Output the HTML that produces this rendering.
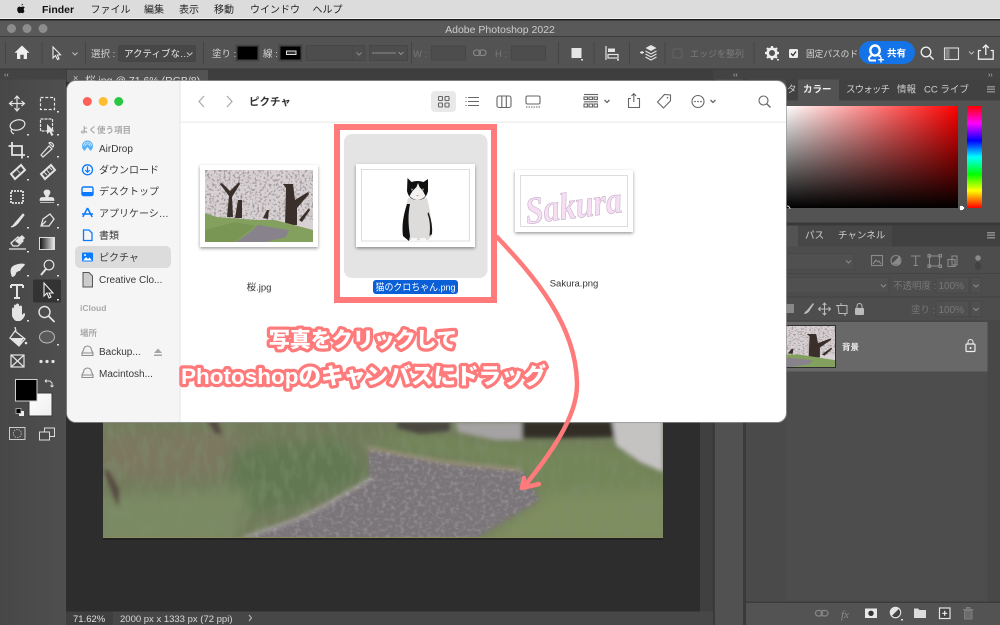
<!DOCTYPE html>
<html lang="ja"><head><meta charset="utf-8"><title>Photoshop</title>
<style>
html,body{margin:0;padding:0;width:1000px;height:625px;overflow:hidden;background:#2d2d2d}
svg{display:block}
text{font-family:"Liberation Sans","Noto Sans CJK JP",sans-serif;font-size:10px}
.m{font-size:10px;fill:#222}
.o{fill:#d4d4d4;font-size:9.5px}
.d{fill:#777;font-size:9.5px}
.s{fill:#3a3a3a;font-size:10px}
.h{fill:#a9a9a9;font-size:8.5px;font-weight:bold}
.t{fill:#cfcfcf;font-size:9.5px}
.i{fill:none;stroke:#e4e4e4;stroke-width:1.2}
.f{fill:#e4e4e4}
.b{fill:none;stroke:#666;stroke-width:1.1}
.c{fill:none;stroke:#bbb;stroke-width:1.1}
.u{fill:none;stroke:#8a8a8a;stroke-width:1.1}
.big{font-weight:900;fill:#fff;stroke:#ff7b7b;stroke-width:6.5px;paint-order:stroke;stroke-linejoin:round;text-anchor:middle}
</style></head><body>
<svg width="1000" height="625" viewBox="0 0 1000 625" xmlns="http://www.w3.org/2000/svg">
<defs>
<filter id="bl" x="-10%" y="-10%" width="120%" height="120%"><feGaussianBlur stdDeviation="7"/></filter>
<filter id="bl2" x="-10%" y="-10%" width="120%" height="120%"><feGaussianBlur stdDeviation="2"/></filter>
<filter id="sh" x="-10%" y="-10%" width="120%" height="130%"><feDropShadow dx="0" dy="1.5" stdDeviation="1.5" flood-color="#000" flood-opacity=".4"/></filter>
<filter id="sp" x="0" y="0" width="100%" height="100%"><feTurbulence type="fractalNoise" baseFrequency=".42" numOctaves="2" seed="4"/><feColorMatrix values="0 0 0 0 .36  0 0 0 0 .32  0 0 0 0 .33  0 0 0 -4.5 2.3"/></filter>
<filter id="gr" x="0" y="0" width="100%" height="100%"><feTurbulence type="fractalNoise" baseFrequency=".22 .28" numOctaves="2" seed="9"/><feColorMatrix values="0 0 0 0 .85  0 0 0 0 .84  0 0 0 0 .84  0 0 0 -3 1.65"/></filter>
<filter id="ga" x="0" y="0" width="100%" height="100%"><feTurbulence type="fractalNoise" baseFrequency=".12 .05" numOctaves="2" seed="3"/><feColorMatrix values="0 0 0 0 .2  0 0 0 0 .27  0 0 0 0 .15  0 0 0 -3 1.7"/></filter>
<linearGradient id="h1" x1="0" x2="1" y1="0" y2="0"><stop offset="0" stop-color="#fff"/><stop offset="1" stop-color="#f00"/></linearGradient>
<linearGradient id="h2" x1="0" x2="0" y1="0" y2="1"><stop offset="0" stop-color="#000" stop-opacity="0"/><stop offset="1" stop-color="#000"/></linearGradient>
<linearGradient id="hue" x1="0" x2="0" y1="0" y2="1"><stop offset="0" stop-color="#f00"/><stop offset=".17" stop-color="#f0f"/><stop offset=".34" stop-color="#00f"/><stop offset=".5" stop-color="#0ff"/><stop offset=".67" stop-color="#0f0"/><stop offset=".83" stop-color="#ff0"/><stop offset="1" stop-color="#f00"/></linearGradient>
<linearGradient id="gd" x1="0" x2="1" y1="0" y2="0"><stop offset="0" stop-color="#111"/><stop offset="1" stop-color="#eee"/></linearGradient>
<linearGradient id="tb" x1="0" x2="1" y1="0" y2="0"><stop offset="0" stop-color="#474747"/><stop offset="1" stop-color="#4f4f4f"/></linearGradient>
<linearGradient id="wh" x1="0" x2="1" y1="0" y2="1"><stop offset="0" stop-color="#fff"/><stop offset="1" stop-color="#eee"/></linearGradient>
<clipPath id="win"><rect x="67" y="81" width="719" height="341" rx="9"/></clipPath>
<clipPath id="ph"><rect x="103" y="400" width="560" height="138"/></clipPath>
<clipPath id="pth"><path d="M368 448L445 463L522 470L540 500L473 538L243 538L321 507L370 477Z"/></clipPath>
<symbol id="scene" viewBox="0 0 108 72" preserveAspectRatio="none">
<rect width="108" height="72" fill="#d8d2d4"/>
<rect width="108" height="50" filter="url(#sp)"/>
<path d="M22 47L24 26L15 14L17 13L25 21L34 12L35 14L27 27L28 47Z M80 55L81 18L78 14L88 14L90 30L103 22L104 24L92 38L92 55Z M30 48L33 30L37 30L37 48Z M94 50L104 38L105 40L97 52Z M58 48L62 40L64 40L63 49Z" fill="#3a2f2a"/>
<path d="M0 43L12 47L51 50L70 50L108 60V72H0Z" fill="#84a05e"/>
<path d="M0 60L30 52L50 56L30 72H0Z" fill="#7a9654"/>
<path d="M53 55L84 60L81 67L61 72L31 72L44 63Z" fill="#87828b"/>
</symbol>
</defs>

<!-- macOS menu -->
<rect width="1000" height="19" fill="#dcdcdc"/>
<rect y="18" width="1000" height="1.5" fill="#efefef"/>
<path d="M21.5 5.5c.8-.1 1.5-.6 1.6-1.600-1 .1-1.700.8-1.600 1.600zM24.500 11c-.3.8-1 2.200-1.900 2.200-.6 0-.9-.4-1.600-.4s-1 .4-1.600.4c-1 0-2.200-1.900-2.200-3.700 0-1.900 1.200-2.900 2.300-2.900.7 0 1.200.4 1.600.4s1-.5 1.800-.5c.6 0 1.400.3 1.900 1-1.600 1-1.300 3.300.3 3.900z" fill="#111"/>
<text x="42" y="13" style="font-size:10.5px;font-weight:bold;fill:#111">Finder</text>
<text x="90.5" y="13" class="m">ファイル</text>
<text x="144" y="13" class="m">編集</text>
<text x="179" y="13" class="m">表示</text>
<text x="214" y="13" class="m">移動</text>
<text x="250" y="13" class="m">ウインドウ</text>
<text x="312.5" y="13" class="m">ヘルプ</text>

<!-- PS window -->
<rect y="19" width="1000" height="606" fill="#3a3a3a"/>
<rect y="19" width="1000" height="1.5" fill="#1d1d1d"/>
<rect y="20.5" width="1000" height="15.5" fill="#595959"/>
<circle cx="11.5" cy="28.5" r="4.5" fill="#8c8c8c"/><circle cx="27" cy="28.5" r="4.5" fill="#8c8c8c"/><circle cx="43" cy="28.5" r="4.5" fill="#8c8c8c"/>
<text x="500" y="33" text-anchor="middle" style="font-size:10.5px;fill:#cdcdcd">Adobe Photoshop 2022</text>
<rect y="36" width="1000" height="1" fill="#3c3c3c"/>
<!-- options bar -->
<rect y="37" width="1000" height="31.5" fill="#535353"/>
<rect y="68.5" width="1000" height="1" fill="#3a3a3a"/>
<g fill="#444">
<rect x="5" y="42" width="1" height="22"/><rect x="41.5" y="42" width="1" height="22"/><rect x="85" y="42" width="1" height="22"/><rect x="203" y="42" width="1" height="22"/><rect x="411" y="42" width="1" height="22"/><rect x="558" y="42" width="1" height="22"/><rect x="593.5" y="42" width="1" height="22"/><rect x="629" y="42" width="1" height="22"/><rect x="664.5" y="42" width="1" height="22"/><rect x="753.5" y="42" width="1" height="22"/>
</g>
<path d="M22 45.5L14.5 52.800H17V59H20.300V54.800H23.700V59H27V52.800H29.500Z" fill="#eee"/>
<path d="M53 47L53 58L55.5 55.5L57.5 59.5L59 58.800L57.300 55L60.500 54.800Z" fill="#4a4a4a" stroke="#eee" stroke-width="1.100"/>
<path d="M72.500 52.500l2.500 2.500 2.500-2.500" class="c"/>
<text x="91" y="57" class="o">選択 :</text>
<rect x="118.500" y="45.500" width="77" height="16" rx="2" fill="#474747" stroke="#454545"/>
<text x="124" y="57" style="font-size:9.5px;fill:#e8e8e8">アクティブな…</text>
<path d="M187 52.500l2.700 2.700 2.700-2.700" class="c"/>
<text x="212" y="57" class="o">塗り :</text>
<rect x="236.500" y="45.500" width="22" height="15" fill="#000" stroke="#444" stroke-width="2"/>
<text x="263" y="57" class="o">線 :</text>
<rect x="279.500" y="45.500" width="22" height="15" fill="#000" stroke="#444" stroke-width="2"/>
<rect x="286.500" y="51" width="9.500" height="3.500" fill="#333" stroke="#ddd"/>
<rect x="306" y="45.500" width="47" height="15" fill="#4d4d4d" stroke="#474747"/>
<rect x="353" y="45.500" width="12" height="15" fill="#4d4d4d" stroke="#474747"/>
<path d="M356.500 52.500l2.500 2.500 2.500-2.500" class="u"/>
<rect x="369.500" y="45.500" width="38" height="15" fill="#4d4d4d" stroke="#474747"/>
<path d="M372 53h24" class="u"/><path d="M398.500 52l2.500 2.500 2.500-2.500" class="u"/>
<text x="413" y="57" class="d">W :</text>
<rect x="431.500" y="46" width="34" height="14" fill="#4d4d4d" stroke="#474747"/>
<g class="u"><rect x="473.500" y="50" width="7" height="5.500" rx="2.700"/><rect x="479" y="50" width="7" height="5.500" rx="2.700"/></g>
<text x="495" y="57" class="d">H :</text>
<rect x="511.500" y="46" width="34" height="14" fill="#4d4d4d" stroke="#474747"/>
<rect x="571.500" y="48" width="10" height="10" fill="#e4e4e4"/><rect x="581" y="59" width="2" height="1.500" fill="#ddd"/>
<path d="M606 46v14" class="i"/><rect x="608" y="48.500" width="7" height="3.500" class="f"/><rect x="608" y="54.500" width="10" height="3.500" class="i"/><rect x="617" y="59" width="2" height="1.500" fill="#ddd"/>
<path d="M640 52.500h4M642 54v-3" class="i"/>
<path d="M651 45l5.500 3-5.500 3-5.500-3z" class="f"/><path d="M645.500 51l5.500 3 5.500-3M645.500 54l5.500 3 5.500-3M645.500 57l5.500 3 5.500-3" class="i"/>
<rect x="673" y="49" width="9" height="9" rx="1.500" fill="none" stroke="#636363"/>
<text x="690" y="57" style="font-size:9px;fill:#7c7c7c">エッジを整列</text>
<g transform="translate(772 53)"><circle r="4.300" fill="none" stroke="#eee" stroke-width="2.600"/><path d="M0-7V-4.500M0 7V4.500M-7 0H-4.500M7 0H4.500M-5-5L-3.200-3.200M5 5L3.200 3.200M-5 5L-3.200 3.200M5-5L3.200-3.200" stroke="#eee" stroke-width="2.200"/></g>
<rect x="777" y="59" width="2" height="1.500" fill="#ddd"/>
<rect x="789" y="49" width="9" height="9" rx="1.500" fill="#eee"/><path d="M791 53.500l2 2 3-4" stroke="#333" stroke-width="1.300" fill="none"/>
<text x="806" y="57" style="font-size:9.2px;fill:#d8d8d8" textLength="52" lengthAdjust="spacingAndGlyphs">固定パスのド</text>
<rect x="859" y="41" width="56" height="23" rx="11.500" fill="#1473e6"/>
<ellipse cx="875" cy="50.500" rx="4.700" ry="5" fill="none" stroke="#fff" stroke-width="2.400"/>
<path d="M871.500 55.500C868.500 57 868.500 59 870 60.500H876M878.500 55.500L881 56.500" fill="none" stroke="#fff" stroke-width="2"/>
<path d="M881 62.500v-5.500M878.200 59.700h5.600" stroke="#fff" stroke-width="1.400"/>
<text x="887" y="56.500" style="font-size:9.5px;font-weight:bold;fill:#fff">共有</text>
<circle cx="926" cy="52" r="4.800" fill="none" stroke="#eee" stroke-width="1.300"/><path d="M929.500 55.500l4 4" stroke="#eee" stroke-width="1.400"/>
<rect x="944.500" y="48" width="14" height="11.500" fill="none" stroke="#ddd" stroke-width="1.100"/><rect x="945.500" y="49" width="4" height="9.500" fill="#888"/>
<path d="M969 51.500l2.500 2.500 2.500-2.500" class="c"/>
<path d="M981 50.500h-2.500v8.700h14.700v-8.700h-2.500M985.800 55v-9.500M982.800 48l3-3 3 3" fill="none" stroke="#eee" stroke-width="1.300"/>

<!-- strip -->
<rect y="69.500" width="1000" height="10" fill="#434343"/>
<text x="4" y="77" style="font-size:7px;fill:#bbb">‹‹</text>
<text x="733" y="77" style="font-size:7px;fill:#bbb">‹‹</text>
<text x="988" y="77" style="font-size:7px;fill:#bbb">››</text>

<!-- canvas area -->
<rect x="66" y="69.500" width="647" height="543" fill="#2d2d2d"/>
<rect x="66" y="69.500" width="647" height="12" fill="#3e3e3e"/>
<rect x="67" y="70" width="141" height="12" fill="#535353"/>
<text x="73" y="81" style="font-size:9px;fill:#ccc">×</text>
<text x="85" y="84" style="font-size:10.5px;fill:#ddd">桜.jpg @ 71.6% (RGB/8)</text>
<rect x="700" y="81" width="12.500" height="531.500" fill="#404040"/>

<!-- photo -->
<g clip-path="url(#ph)">
<rect x="103" y="400" width="560" height="138" fill="#717b5b"/>
<g filter="url(#bl)">
<path d="M103 430H240L250 470L170 482L103 478Z" fill="#7b7861"/>
<path d="M230 450L345 440L365 478L300 505L235 515Z" fill="#627852"/>
<path d="M103 495L250 490L235 545H95Z" fill="#7a8a64"/>
<path d="M400 432L522 444L620 445L670 480V545H470L545 500L522 470L368 445Z" fill="#738658"/>
<path d="M545 495L670 490V545H475Z" fill="#7f8e5e"/>
</g>
<rect x="103" y="422" width="560" height="116" filter="url(#ga)" opacity=".45"/>
<g filter="url(#bl2)">
<path d="M368 448L445 463L522 470L540 500L473 540L243 540L321 507L370 477Z" fill="#7a7479"/>
<path d="M243 538L300 518L325 505L372 478" fill="none" stroke="#a5a09c" stroke-width="3"/>
<path d="M368 448L445 462L522 470" fill="none" stroke="#a39a7c" stroke-width="2.500"/>
<path d="M397 421H450V431L420 434L397 428Z" fill="#4a4640"/>
<path d="M522 421H620V437L560 438L522 438Z" fill="#302d28"/>
<path d="M455 422H522V440L495 440L458 432Z" fill="#a4a2a2"/>
<path d="M612 420H663V472L640 462L616 445Z" fill="#c5c2c2"/>
<path d="M207 420h10l5 14h-6zM104 470L118 508L119 490L108 470Z" fill="#55473f"/>
</g>
<g clip-path="url(#pth)"><rect x="240" y="445" width="305" height="95" filter="url(#gr)" opacity=".18"/></g>
</g>
<rect x="103" y="537" width="560" height="1" fill="#8f8a5e"/>
<rect x="103" y="538" width="560" height="2" fill="#222"/>

<!-- left toolbar -->
<rect y="79.500" width="66" height="545.500" fill="url(#tb)"/>
<rect x="33" y="279.500" width="28" height="23" rx="2" fill="#333"/>
<g>
<path d="M17 96.500v14M10 103.500h14" class="i"/><path d="M14.500 99l2.500-3 2.500 3M14.500 108l2.500 3 2.500-3M12.500 101l-3 2.500 3 2.500M21.500 101l3 2.500-3 2.500" class="i"/>
<rect x="40.500" y="97.500" width="14" height="12" class="i" stroke-dasharray="3 1.800"/>
<ellipse cx="17.500" cy="125" rx="7.500" ry="5" class="i" transform="rotate(-15 17.500 125)"/><path d="M12 129c-2 2 0 4 2 5" class="i"/>
<rect x="40.500" y="119" width="12" height="12" class="i" stroke-dasharray="3 1"/><path d="M47 124v10l2.500-2 2 4 2-1-2-3.500h3z" class="f"/>
<path d="M12 142v13h13M8.500 146h13.500v12.500" class="i" style="stroke-width:1.800"/>
<path d="M41 155l8-9 3 3-9 8zM49 143c2-2 6 2 4 4z" class="i"/>
<path d="M11 174l10-9 4 5-10 9z" class="i" style="stroke-width:2"/><path d="M17 170l3 3" stroke="#bbb"/>
<path d="M41 174l10-9 4 5-10 9z" class="i" style="stroke-width:2"/><path d="M46 169l4 5M44 172l3 3M49 167l3 3" stroke="#ddd"/>
<rect x="11" y="191" width="12" height="12" class="i" style="stroke-width:1.800" stroke-dasharray="2 1"/>
<path d="M47 190c-2 0-3 1-3 2.500 0 2 2 2 2 5h-4c-1.500 0-2 1-2 3h14c0-2-.5-3-2-3h-4c0-3 2-3 2-5 0-1.500-1-2.500-3-2.500zM40 202.500h14" class="f" stroke="#e4e4e4" stroke-width=".8"/>
<path d="M11 227c3-1 3-3 5-5l7-8 1 1-6 8c-2 2-4 4-7 4z" class="f" stroke="#e4e4e4"/>
<path d="M41 226l2-7 7-5 4 5-5 7zM41 226l5-5" class="i" style="stroke-width:1.300"/>
<path d="M11 243l7-6 5 4-5 5h-5zM9 249h17" class="i" style="stroke-width:1.300"/><path d="M15 241l7-6 3 3-6 6z" class="f"/>
<rect x="39.500" y="237.500" width="15" height="12" fill="url(#gd)" stroke="#ddd"/>
<path d="M12 277c-2-5-2-9 1-11 3-2 9-3 12-2-1 3-4 4-5 7-2 0-3 1-4 2 0 2-2 4-4 4z" class="f"/>
<circle cx="49" cy="265" r="4.800" class="i"/><path d="M46 269l-5 6" class="i" style="stroke-width:2"/>
<path d="M11 285h12M17 285v13M14 298h6M11 285v3M23 285v3" class="i" style="stroke-width:2"/>
<path d="M44 283v13l3-3 2 5 2-1-2-4h4z" fill="#333" stroke="#eee" stroke-width="1.100"/>
<path d="M12 316v-7c0-2 2-2 2 0v-3c0-2 2-2 2 0v-1c0-2 3-2 3 0v2c0-2 3-2 3 0v8l2-2c1 0 1 1 1 2-1 3-3 5-5 6h-4c-2-1-3-3-4-5z" class="f"/>
<circle cx="44.500" cy="312" r="5.500" class="i" style="stroke-width:1.400"/><path d="M48.500 316l6 6" class="i" style="stroke-width:1.800"/>
<path d="M15 331l10 8-6 7-9-8zM16 331l-1-4" class="i" style="stroke-width:1.300"/><path d="M11 338h13l-5 8z" class="f"/><circle cx="26" cy="343" r="1.300" class="f"/>
<ellipse cx="47" cy="337" rx="7.500" ry="6" fill="#5a5a5a" stroke="#bbb"/>
<rect x="11" y="355" width="13" height="12" class="i"/><path d="M11 355l13 12M24 355l-13 12" class="i"/>
<circle cx="41" cy="361.500" r="1.600" class="f"/><circle cx="47" cy="361.500" r="1.600" class="f"/><circle cx="53" cy="361.500" r="1.600" class="f"/>
<g fill="#ddd"><rect x="57" y="111" width="2" height="1.500"/><rect x="27" y="134" width="2" height="1.500"/><rect x="57" y="134" width="2" height="1.500"/><rect x="27" y="156" width="2" height="1.500"/><rect x="57" y="156" width="2" height="1.500"/><rect x="27" y="179" width="2" height="1.500"/><rect x="57" y="204" width="2" height="1.500"/><rect x="27" y="227" width="2" height="1.500"/><rect x="57" y="227" width="2" height="1.500"/><rect x="27" y="251" width="2" height="1.500"/><rect x="27" y="275" width="2" height="1.500"/><rect x="57" y="275" width="2" height="1.500"/><rect x="57" y="299" width="2" height="1.500"/><rect x="27" y="320" width="2" height="1.500"/><rect x="57" y="344" width="2" height="1.500"/></g>
</g>
<path d="M45 381h5l2 2v4M52 387l-1.500-1.500M52 387l1.500-1.500M45 381l1.500-1.500M45 381l1.500 1.500" stroke="#ddd" fill="none" stroke-width="1"/>
<rect x="29" y="393" width="23" height="23" fill="url(#wh)" stroke="#3a3a3a"/>
<rect x="15.500" y="379.500" width="21.500" height="21.500" fill="#000" stroke="#cfcfcf" stroke-width="1"/>
<rect x="19" y="411" width="5" height="5" fill="#eee"/><rect x="16" y="408.500" width="5" height="5" fill="#000" stroke="#ccc" stroke-width=".7"/>
<rect x="9.500" y="427.500" width="15.500" height="12" fill="none" stroke="#ccc"/><circle cx="17.300" cy="433.500" r="4" fill="none" stroke="#aaa" stroke-dasharray="1.500 1"/>
<rect x="44.500" y="428" width="10" height="8.500" fill="none" stroke="#ddd"/><rect x="39.500" y="432" width="10" height="8" fill="#4a4a4a" stroke="#ddd"/>

<!-- right dock and panels -->
<rect x="712.500" y="79.500" width="287.500" height="546" fill="#3a3a3a"/>
<rect x="715" y="79.500" width="28" height="546" fill="#515151"/>
<rect x="746" y="79.500" width="254" height="546" fill="#4a4a4a"/>
<rect x="786" y="79.500" width="214" height="21" fill="#414141"/>
<rect x="798" y="79.500" width="41" height="21" fill="#535353"/>
<text x="803" y="92.500" style="font-size:9.5px;font-weight:bold;fill:#eee">カラー</text>
<text x="846" y="92.500" class="t" textLength="44">スウォッチ</text>
<text x="897" y="92.500" class="t">情報</text>
<text x="924" y="92.500" class="t">CC ライブ</text>
<text x="787" y="92.500" class="t">タ</text>
<g fill="#8a8a8a"><rect x="987" y="86" width="8" height="1.500"/><rect x="987" y="88.500" width="8" height="1.500"/><rect x="987" y="91" width="8" height="1.500"/></g>
<rect x="786" y="100.500" width="214" height="122" fill="#535353"/>
<rect x="786" y="106" width="172" height="102" fill="url(#h1)"/>
<rect x="786" y="106" width="172" height="102" fill="url(#h2)"/>
<rect x="967" y="106" width="15" height="102" fill="url(#hue)"/>
<path d="M959.500 205.500h3l2.500 2.500-2.500 2.500h-3z" fill="#fff" stroke="#222" stroke-width=".5"/>
<path d="M787 206a3 3 0 0 1 3 3" fill="none" stroke="#ddd"/>
<rect x="786" y="222.500" width="214" height="3" fill="#393939"/>
<rect x="786" y="225.500" width="214" height="21" fill="#414141"/>
<rect x="786" y="225.500" width="12" height="21" fill="#535353"/>
<rect x="798" y="225.500" width="32" height="21" fill="#474747"/>
<rect x="830" y="225.500" width="62" height="21" fill="#474747"/>
<text x="805" y="238.500" class="t">パス</text>
<text x="838" y="238.500" class="t">チャンネル</text>
<g fill="#8a8a8a"><rect x="987" y="232" width="8" height="1.500"/><rect x="987" y="234.500" width="8" height="1.500"/><rect x="987" y="237" width="8" height="1.500"/></g>
<rect x="786" y="246.500" width="214" height="355" fill="#4d4d4d"/>
<rect x="786" y="253.500" width="68" height="16" fill="#505050" stroke="#484848"/>
<path d="M846 260.500l2.500 2.500 2.500-2.500" class="u"/>
<g class="u"><rect x="871.500" y="255.500" width="11" height="10"/><path d="M873 264l3-4 2 2 1-1 2 3"/>
<circle cx="896" cy="260.500" r="5"/><path d="M892.500 264l7-7v7z" fill="#8a8a8a"/>
<path d="M911 256h9.500M915.700 256v9.500M913.500 265.500h4.500"/>
<rect x="929.500" y="256" width="10" height="10"/><rect x="928" y="254.500" width="2.500" height="2.500"/><rect x="939" y="254.500" width="2.500" height="2.500"/><rect x="928" y="265" width="2.500" height="2.500"/><rect x="939" y="265" width="2.500" height="2.500"/>
<rect x="948" y="259.500" width="7" height="7"/><rect x="952" y="256" width="5" height="9"/></g>
<circle cx="978" cy="258" r="2.800" fill="#8a8a8a"/><rect x="975" y="262" width="6" height="8" rx="3" fill="#424242"/>
<rect x="786" y="273" width="214" height="1" fill="#444"/>
<rect x="786" y="277.500" width="103" height="15.500" fill="#505050" stroke="#484848"/>
<path d="M881 284.500l2.500 2.500 2.500-2.500" class="u"/>
<text x="893" y="289" class="d">不透明度 :</text>
<rect x="936" y="277.500" width="33" height="15.500" fill="#505050" stroke="#484848"/>
<text x="938.500" y="289" class="d" style="font-size:10px">100%</text>
<rect x="970.500" y="277.500" width="11" height="15.500" fill="#505050" stroke="#484848"/>
<path d="M973.500 284.500l2.500 2.500 2.500-2.500" class="u"/>
<rect x="786" y="296.500" width="214" height="1" fill="#444"/>
<rect x="786" y="304" width="8" height="9" fill="#888"/>
<path d="M804 314c1-3 3-3 4-5l5-6 1 1-4 6c-1 2-3 4-6 4z" fill="#bbb"/>
<path d="M824.500 303v12M818.500 309h12M822.700 305l1.800-2 1.800 2M822.700 313l1.800 2 1.800-2M820.500 307l-2 2 2 2M828.500 307l2 2-2 2" fill="none" stroke="#bbb"/>
<path d="M838 305.500h9v8h-8zM836 305.500h3M841 303v3M845 313v3" fill="none" stroke="#bbb"/>
<rect x="855" y="308" width="9" height="7" rx="1" fill="#bbb"/><path d="M857 308v-2a2.500 2.500 0 0 1 5 0v2" fill="none" stroke="#bbb"/>
<text x="911" y="313" class="d">塗り :</text>
<rect x="936" y="301" width="33" height="15.500" fill="#505050" stroke="#484848"/>
<text x="938.500" y="313" class="d" style="font-size:10px">100%</text>
<rect x="970.500" y="301" width="11" height="15.500" fill="#505050" stroke="#484848"/>
<path d="M973.500 308l2.500 2.500 2.500-2.500" class="u"/>
<rect x="786" y="320.500" width="214" height="1" fill="#444"/>
<rect x="786" y="322" width="201.500" height="49.500" fill="#686868"/>
<rect x="987.500" y="322" width="12.500" height="280" fill="#484848"/>
<svg x="786" y="326" width="49" height="41" viewBox="56 0 52 72" preserveAspectRatio="none"><use href="#scene" width="108" height="72"/></svg>
<rect x="785.500" y="325.500" width="50" height="42" fill="none" stroke="#2f2f2f"/>
<text x="842" y="350" style="font-size:8.5px;font-weight:bold;fill:#eee">背景</text>
<rect x="966" y="344" width="9" height="7.500" rx="1" fill="none" stroke="#eee" stroke-width="1.200"/><path d="M968 344v-2a2.500 2.500 0 0 1 5 0v2" fill="none" stroke="#eee"/><rect x="969.800" y="347" width="1.500" height="2" fill="#eee"/>
<rect x="746" y="601.500" width="254" height="1.500" fill="#3c3c3c"/>
<rect x="746" y="603" width="254" height="22" fill="#535353"/>
<g fill="none" stroke="#868686" stroke-width="1.300"><rect x="815.500" y="610.500" width="7" height="5.500" rx="2.700"/><rect x="821" y="610.500" width="7" height="5.500" rx="2.700"/></g>
<text x="841" y="618" style="font-size:11px;font-style:italic;font-family:'Liberation Serif',serif;fill:#8c8c8c">fx</text>
<rect x="865" y="608.500" width="12" height="9.500" fill="#e8e8e8"/><circle cx="871" cy="613.300" r="2.700" fill="#333"/>
<circle cx="895.500" cy="612.500" r="5.200" fill="#444" stroke="#e4e4e4" stroke-width="1.100"/><path d="M891.700 616l7.500-7.500a5 5 0 0 0-7.500 7.500z" fill="#e4e4e4"/><rect x="901" y="619" width="2" height="1.500" fill="#ddd"/>
<path d="M914 608.500h4l1.500 1.500h6.500v8h-12z" fill="#dcdcdc"/>
<rect x="939.500" y="608" width="10.500" height="10.500" fill="#444" stroke="#e4e4e4" stroke-width="1.200"/><path d="M944.700 610.800v5M942.200 613.300h5" stroke="#eee" stroke-width="1.200"/>
<path d="M964.500 610.500v8.500h7.500v-8.500zM963 609.500h10.500M966.500 609v-1.500h3.500v1.500" fill="#6c6c6c" stroke="#7d7d7d"/>

<!-- status bar -->
<rect x="66" y="611.500" width="647" height="13.500" fill="#474747"/>
<rect x="66" y="611.500" width="47" height="13.500" fill="#3f3f3f"/>
<text x="73" y="622" style="font-size:9.5px;fill:#e0e0e0">71.62%</text>
<text x="120" y="622" style="font-size:9.5px;fill:#d8d8d8">2000 px x 1333 px (72 ppi)</text>
<path d="M249 615l2.500 3-2.500 3" fill="none" stroke="#bbb"/>

<!-- Finder window -->
<rect x="66" y="80" width="721" height="343" rx="10" fill="#999" opacity=".7"/>
<g clip-path="url(#win)">
<rect x="67" y="81" width="719" height="341" fill="#fff"/>
<rect x="67" y="81" width="113" height="341" fill="#f5f5f5"/>
<rect x="179.500" y="81" width="1" height="341" fill="#e5e5e5"/>
<rect x="180" y="121.500" width="606" height="1.500" fill="#efefef"/>
</g>
<circle cx="87.300" cy="101.500" r="4.500" fill="#ff5f57"/><circle cx="103.200" cy="101.500" r="4.500" fill="#febc2e"/><circle cx="118.700" cy="101.500" r="4.500" fill="#28c840"/>
<text x="80" y="133" class="h">よく使う項目</text>
<rect x="75" y="246" width="96" height="22" rx="5" fill="#dcdcdc"/>
<g>
<path d="M82 146a5.500 5.500 0 0 1 11 0c0 2-1 3.500-2.500 5l-3-4-3 4c-1.500-1.500-2.500-3-2.500-5z" fill="#5ab0f5"/><path d="M83.500 146a4 4 0 0 1 8 0M85 146.300a2.500 2.500 0 0 1 5 0" stroke="#d5ecff" stroke-width=".8" fill="none"/>
<circle cx="87.500" cy="169.800" r="5" fill="none" stroke="#0a7aff" stroke-width="1.300"/><path d="M87.500 166.500v5.500M85.200 170l2.300 2.300 2.300-2.300" fill="none" stroke="#0a7aff" stroke-width="1.200"/>
<rect x="82" y="187" width="11" height="8.500" rx="1.500" fill="none" stroke="#0a7aff" stroke-width="1.400"/><rect x="82" y="192" width="11" height="3.500" fill="#0a7aff"/>
<path d="M87.500 208l-4.700 9M87.500 208l4.700 9M82 214h11" stroke="#0a7aff" stroke-width="1.500" fill="none"/>
<path d="M83.500 230h5.500l3 3v7.500h-8.500z" fill="none" stroke="#0a7aff" stroke-width="1.300"/>
<rect x="82" y="252.500" width="11" height="9" rx="1" fill="#0a7aff"/><path d="M83 260.500l3-3.500 2 2 1.500-1.500 2.500 3z" fill="#fff"/><circle cx="85" cy="255" r="1" fill="#fff"/>
<path d="M83 272.500h6l3.500 3.500v11h-9.500z" fill="#ccc" stroke="#555"/>
<g fill="#f2f2f2" stroke="#8e8e8e" stroke-width="1.100"><path d="M83.500 350a4 4 0 0 1 8 0l1.500 3v2.500h-11v-2.500z"/><path d="M83.500 372a4 4 0 0 1 8 0l1.500 3v2.500h-11v-2.500z"/></g>
<path d="M82 353h11M82 375h11" stroke="#8e8e8e"/>
</g>
<text x="99" y="152" class="s">AirDrop</text>
<text x="99" y="173.500" class="s">ダウンロード</text>
<text x="99" y="195" class="s">デスクトップ</text>
<text x="99" y="217" class="s">アプリケーシ…</text>
<text x="99" y="239" class="s">書類</text>
<text x="99" y="261" class="s">ピクチャ</text>
<text x="99" y="283" class="s">Creative Clo...</text>
<text x="80" y="311" class="h">iCloud</text>
<text x="80" y="336" class="h">場所</text>
<text x="99" y="355" class="s">Backup...</text>
<path d="M154 353l4-4.500 4 4.500zM154 354.500h8v1.500h-8z" fill="#a5a5a5"/>
<text x="99" y="377" class="s">Macintosh...</text>
<!-- finder toolbar -->
<path d="M204 96l-5 5.500 5 5.500" fill="none" stroke="#aaa" stroke-width="1.200"/>
<path d="M227 96l5 5.500-5 5.500" fill="none" stroke="#aaa" stroke-width="1.200"/>
<text x="249" y="105" style="font-size:10.5px;font-weight:bold;fill:#333">ピクチャ</text>
<rect x="431" y="91" width="25" height="21" rx="4" fill="#e9e9e9"/>
<g class="b"><rect x="438.500" y="96.500" width="4" height="4" rx=".7"/><rect x="445" y="96.500" width="4" height="4" rx=".7"/><rect x="438.500" y="103" width="4" height="4" rx=".7"/><rect x="445" y="103" width="4" height="4" rx=".7"/></g>
<path d="M468 97.500h11M468 101.500h11M468 105.500h11" class="b"/><path d="M465.500 97.500h1M465.500 101.500h1M465.500 105.500h1" class="b"/>
<rect x="497" y="96" width="14" height="11.500" rx="2" class="b"/><path d="M501.800 96v11.500M506.300 96v11.500" class="b"/>
<rect x="526" y="96" width="14" height="8" rx="1.500" class="b"/><path d="M526 107h14" class="b" stroke-dasharray="1.500 1"/>
<g class="b"><path d="M584 94.500h14"/><rect x="584" y="97" width="3.500" height="2.500"/><rect x="589" y="97" width="3.500" height="2.500"/><rect x="594" y="97" width="3.500" height="2.500"/><path d="M584 101.800h14"/><rect x="584" y="104" width="3.500" height="3"/><rect x="589" y="104" width="3.500" height="3"/><rect x="594" y="104" width="3.500" height="3"/></g>
<path d="M604.500 100l2.500 2.500 2.500-2.500" class="b" style="stroke-width:1.300"/>
<path d="M631 98.500h-2.500v9h11v-9h-2.500M633.800 102v-8.500M631.500 96l2.300-2.500 2.300 2.500" class="b"/>
<path d="M657.500 102l7-7.500 6 0.500 0 5.800-7 7.200z" class="b"/><circle cx="667.500" cy="97.800" r=".8" fill="#666"/>
<circle cx="698" cy="101.500" r="6" class="b"/><circle cx="695" cy="101.500" r=".8" fill="#555"/><circle cx="698" cy="101.500" r=".8" fill="#555"/><circle cx="701" cy="101.500" r=".8" fill="#555"/>
<path d="M710.500 100l2.500 2.500 2.500-2.500" class="b" style="stroke-width:1.300"/>
<circle cx="763.500" cy="100.500" r="4.500" class="b"/><path d="M767 104l3.500 3.500" class="b" style="stroke-width:1.300"/>

<!-- files -->
<rect x="200" y="165" width="118" height="82" fill="#fff" filter="url(#sh)"/>
<svg x="205" y="170" width="108" height="72" viewBox="0 0 108 72"><use href="#scene" width="108" height="72"/></svg>
<text x="259" y="290.500" text-anchor="middle" style="font-size:9.5px;fill:#333">桜.jpg</text>

<rect x="344" y="134" width="143.500" height="144" rx="8" fill="#e4e4e4"/>
<rect x="356" y="164" width="119" height="83" fill="#fff" filter="url(#sh)"/>
<rect x="361.500" y="169.500" width="108" height="71.500" fill="#fff" stroke="#ddd"/>
<!-- cat -->
<path d="M408 198Q402 222 403 236L408 240H428L432 236Q433 222 427 198Z" fill="#dedcda"/>
<path d="M407 204Q401 222 403 236L409 241L410 236Q407 218 410 204Z" fill="#111"/>
<path d="M428.500 212Q433 224 432 234L429.500 236Q431 222 427.500 214Z" fill="#1a1a1a"/>
<path d="M407.500 178L411.500 182Q417.500 180 423.500 182L428 179L428 191Q426 200 417.500 200Q409 200 407 191Z" fill="#111"/>
<path d="M409.500 196Q417.500 204 425.500 196L423 191L419.500 187L418 183L416.500 187L412.500 191Z" fill="#f4f2f0"/>
<path d="M416 195h3l-1.500 1.500z" fill="#c99"/>
<circle cx="412" cy="189.500" r="1" fill="#797"/><circle cx="423" cy="189.500" r="1" fill="#797"/>
<path d="M411 241h6v-3h-6zM420 241h6v-3h-6z" fill="#f6f6f6"/>
<rect x="373" y="280" width="85" height="14" rx="3" fill="#0a5fd6"/>
<text x="415.500" y="290.500" text-anchor="middle" style="font-size:9.5px;fill:#fff" textLength="80" lengthAdjust="spacingAndGlyphs">猫のクロちゃん.png</text>

<rect x="515" y="170" width="118" height="62" fill="#fff" filter="url(#sh)"/>
<rect x="520.500" y="175.500" width="107" height="51" fill="#fff" stroke="#ddd"/>
<text x="525" y="218" textLength="97" lengthAdjust="spacingAndGlyphs" transform="rotate(-7 574 205)" style="font-family:'Liberation Serif',serif;font-style:italic;font-weight:bold;font-size:38px;fill:#f6def4;stroke:#c4aec4;stroke-width:.6px">Sakura</text>
<text x="574" y="286.500" text-anchor="middle" style="font-size:9.5px;fill:#333">Sakura.png</text>

<!-- annotations -->
<rect x="337" y="127" width="157" height="173" fill="none" stroke="#ff7b7b" stroke-width="6"/>
<path d="M497 237C533 275 577 325 577 385C577 420 545 460 524 487" fill="none" stroke="#ff7b7b" stroke-width="4.500" stroke-linecap="round"/>
<path d="M524 478L522 488L539 484" fill="none" stroke="#ff7b7b" stroke-width="4.500" stroke-linecap="round" stroke-linejoin="round"/>
<text x="363" y="347" class="big" style="font-size:21px">写真をクリックして</text>
<text x="363.500" y="384" class="big" style="font-size:22.5px">Photoshopのキャンバスにドラッグ</text>
</svg>
</body></html>
